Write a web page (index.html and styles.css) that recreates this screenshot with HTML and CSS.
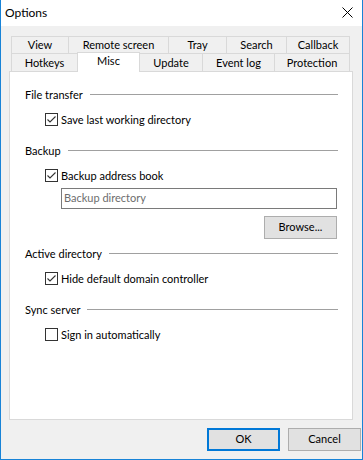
FILE: index.html
```html
<!DOCTYPE html>
<html lang="en">
<head>
    <meta charset="UTF-8">
    <title>Options</title>
    <link rel="stylesheet" href="styles.css">
</head>
<body>

<div class="window">
    <div class="titlebar">
        <span class="title">Options</span>
        <svg class="close" width="11" height="11" viewBox="0 0 11 11">
            <path d="M0.5 0.5 L10.5 10.5 M10.5 0.5 L0.5 10.5" stroke="#000" stroke-width="1" fill="none"/>
        </svg>
    </div>

    <div class="client">
        <div class="tabs">
            <div class="tab-row row-back">
                <div class="tab w-view">View</div>
                <div class="tab w-remote">Remote screen</div>
                <div class="tab w-tray">Tray</div>
                <div class="tab w-search">Search</div>
                <div class="tab w-callback last">Callback</div>
            </div>
            <div class="tab-row row-front">
                <div class="tab w-hotkeys">Hotkeys</div>
                <div class="tab w-misc selected">Misc</div>
                <div class="tab w-update">Update</div>
                <div class="tab w-eventlog">Event log</div>
                <div class="tab w-protection last">Protection</div>
            </div>
        </div>

        <div class="panel">
            <div class="group">
                <span class="group-label">File transfer</span>
                <span class="group-line"></span>
            </div>
            <label class="check">
                <svg class="box" width="13" height="13" viewBox="0 0 13 13">
                    <rect x="0.5" y="0.5" width="12" height="12" fill="#fff" stroke="#333"/>
                    <path d="M2.5 6.5 L5 9 L10.5 3.5" stroke="#333" stroke-width="1.1" fill="none"/>
                </svg>
                <span>Save last working directory</span>
            </label>

            <div class="group">
                <span class="group-label">Backup</span>
                <span class="group-line"></span>
            </div>
            <label class="check">
                <svg class="box" width="13" height="13" viewBox="0 0 13 13">
                    <rect x="0.5" y="0.5" width="12" height="12" fill="#fff" stroke="#333"/>
                    <path d="M2.5 6.5 L5 9 L10.5 3.5" stroke="#333" stroke-width="1.1" fill="none"/>
                </svg>
                <span>Backup address book</span>
            </label>
            <div class="field">Backup directory</div>
            <div class="browse-row">
                <div class="btn">Browse...</div>
            </div>

            <div class="group">
                <span class="group-label">Active directory</span>
                <span class="group-line"></span>
            </div>
            <label class="check">
                <svg class="box" width="13" height="13" viewBox="0 0 13 13">
                    <rect x="0.5" y="0.5" width="12" height="12" fill="#fff" stroke="#333"/>
                    <path d="M2.5 6.5 L5 9 L10.5 3.5" stroke="#333" stroke-width="1.1" fill="none"/>
                </svg>
                <span>Hide default domain controller</span>
            </label>

            <div class="group">
                <span class="group-label">Sync server</span>
                <span class="group-line"></span>
            </div>
            <label class="check">
                <svg class="box" width="13" height="13" viewBox="0 0 13 13">
                    <rect x="0.5" y="0.5" width="12" height="12" fill="#fff" stroke="#333"/>
                </svg>
                <span>Sign in automatically</span>
            </label>
        </div>

        <div class="buttons">
            <div class="btn default">OK</div>
            <div class="btn">Cancel</div>
        </div>
    </div>
</div>

</body>
</html>
```

FILE: styles.css
```css
* {
    box-sizing: border-box;
}
body {
    margin: 0;
    font-family: Lato, "Noto Sans", sans-serif;
    font-size: 11px;
    color: #000;
}
.window {
    width: 363px;
    height: 460px;
    background-color: #f0f0f0;
    border: 1px solid #1883d7;
    border-top: none;
    display: flex;
    flex-direction: column;
}
.titlebar {
    height: 26px;
    background-color: #fff;
    display: flex;
    align-items: center;
    justify-content: space-between;
    padding: 0 9px 2px 4px;
    margin: 0 -1px;
    border-left: 1px solid #1883d7;
    border-right: 1px solid #1883d7;
}
.title {
    font-size: 12px;
}
.client {
    padding: 10px 0 0 8px;
}
.tabs {
    margin-left: 2px;
    width: 339px;
    position: relative;
    z-index: 1;
}
.tab-row {
    display: flex;
}
.row-back {
    height: 17px;
}
.row-front {
    height: 18px;
    align-items: flex-end;
}
.tab {
    height: 100%;
    border-top: 1px solid #d9d9d9;
    border-left: 1px solid #d9d9d9;
    background-color: #f0f0f0;
    text-align: center;
    line-height: 16px;
    white-space: nowrap;
}
.tab.last {
    border-right: 1px solid #d9d9d9;
}
.row-front .tab {
    line-height: 17px;
}
.tab.selected {
    height: 20px;
    margin-bottom: -1px;
    background-color: #fff;
    border-right: 1px solid #d9d9d9;
    line-height: 16px;
}
.w-view { width: 57px; }
.w-remote { width: 100px; }
.w-tray { width: 58px; }
.w-search { width: 60px; }
.w-callback { width: 64px; }
.w-hotkeys { width: 66px; }
.w-misc { width: 63px; }
.w-update { width: 62px; border-left: none; }
.w-eventlog { width: 72px; }
.w-protection { width: 76px; }
.panel {
    width: 344px;
    height: 349px;
    background-color: #fff;
    border: 1px solid #d9d9d9;
    padding: 14px 14px 0 15px;
}
.group {
    display: flex;
    align-items: center;
    height: 16px;
    margin-bottom: 9px;
}
.group-label {
    white-space: nowrap;
}
.group-line {
    flex: 1;
    height: 1px;
    margin-left: 7px;
    background-color: #a0a0a0;
}
.check {
    display: flex;
    align-items: center;
    height: 16px;
    margin-left: 20px;
    margin-bottom: 15px;
}
.box {
    flex: none;
    margin-right: 3px;
}
.field {
    margin: -10px 1px 0 36px;
    height: 21px;
    border: 1px solid #7a7a7a;
    color: #6d6d6d;
    padding-left: 2px;
    line-height: 18px;
}
.browse-row {
    display: flex;
    justify-content: flex-end;
    margin: 7px 0 6px;
}
.btn {
    width: 73px;
    height: 23px;
    background-color: #e1e1e1;
    border: 1px solid #adadad;
    text-align: center;
    line-height: 20px;
}
.browse-row .btn {
    margin-right: 1px;
}
.buttons {
    display: flex;
    justify-content: flex-end;
    gap: 8px;
    margin: 8px 1px 0 0;
}
.btn.default {
    border: 2px solid #0078d7;
    line-height: 18px;
}
```
